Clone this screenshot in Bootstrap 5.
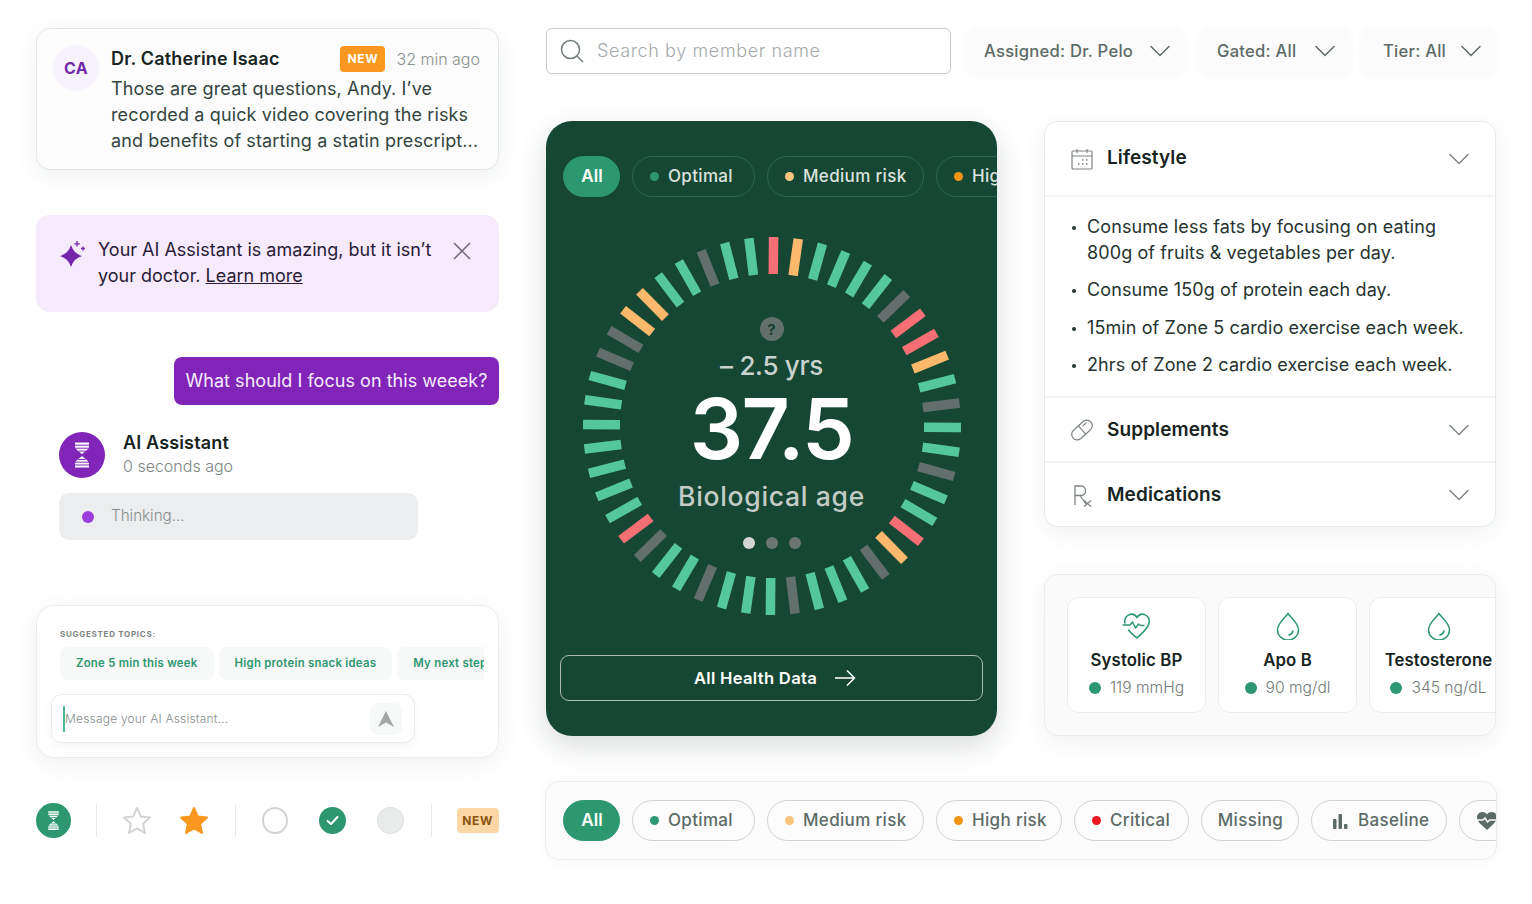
<!doctype html>
<html lang="en"><head><meta charset="utf-8"><title>Health UI kit</title>
<link href="https://cdn.jsdelivr.net/npm/bootstrap@5.3.0/dist/css/bootstrap.min.css" rel="stylesheet">
<script src="https://cdn.jsdelivr.net/npm/bootstrap@5.3.0/dist/js/bootstrap.bundle.min.js"></script>
<style>
:root{--ink:#17241f;--mut:#5d6b67;--grn:#2d9770;--pur:#8125b8}
html,body{height:904px;overflow:hidden;background:#fff}
body{font-family:Inter,"Noto Sans",sans-serif;color:var(--ink);font-size:17px}
svg{display:block;flex:none}
.canvas{padding:28px 36px 0;gap:47px;width:1532px}
.lcol{width:463px;flex:none}
.rarea{width:951px;flex:none}
.shad{box-shadow:0 6px 24px rgba(30,40,40,.07)}
.msg{height:142px;border:1px solid #e4e6e6;border-radius:14px;background:#fcfcfc;padding:16px 18px 0 16px;gap:12px}
.ini{width:46px;height:46px;background:#f7f2fc;color:#702aa8;font-weight:700;font-size:16px;letter-spacing:.02em}
.who{font-weight:600;font-size:18px;letter-spacing:.2px;margin-right:auto}
.tagn{width:45px;height:26px;background:#f9971e;color:#fff;font-size:12px;font-weight:700;border-radius:4px;letter-spacing:.05em}
.ago{color:#8a9290;font-size:16px;margin-left:11px;font-weight:300}
.msgtxt{font-size:18px;line-height:26px;color:#334540;margin-top:4px;letter-spacing:.13px;white-space:nowrap}
.note{margin-top:45px;height:97px;background:#f6eafc;border-radius:14px;padding:22px 27px 0 23px;gap:12px;color:#2a1c38;font-size:18px;line-height:26px}
.note a{color:inherit}
.bub{margin-top:45px;height:48px;width:325px;background:var(--pur);color:#f6ecfc;font-size:18px;border-radius:8px;align-self:flex-end;white-space:nowrap;letter-spacing:.04px;padding-bottom:2px}
.aiwho{margin-top:27px;margin-left:23px;gap:18px}
.aiav{width:46px;height:46px;background:var(--pur);--hg:#8125b8}
.ainame{font-weight:600;font-size:18px;line-height:22px;letter-spacing:.15px}
.aiago{color:#7c8684;font-size:16px;line-height:24px;font-weight:300}
.think{margin-top:15px;margin-left:23px;width:359px;height:47px;background:#ebedee;border-radius:10px;padding:0 0 1px 23px;gap:17px;color:#868d8c;font-size:15.2px;font-weight:300}
.pdot{width:12px;height:12px;background:#9b3ddb;margin-top:1px}
.sug{margin-top:65px;height:153px;border:1px solid #ececec;border-radius:18px;background:#fff;padding:23px 14px 0 14px}
.sugl{font-size:8px;font-weight:700;color:#7d8583;letter-spacing:.09em;margin-left:9px;line-height:10px}
.chips{gap:5px;margin:8px 0 0 9px;overflow:hidden}
.chip{height:33px;padding:0 16px;background:#f7f8f8;border-radius:8px;color:var(--grn);font-size:11.4px;font-weight:600;white-space:nowrap;flex:none;letter-spacing:.25px}
.msgin{margin-top:14px;width:364px;height:49px;border:1px solid #ececec;border-radius:11px;background:#fff;padding:0 12px 0 11px;box-shadow:0 3px 10px rgba(30,40,40,.05);color:#858c8b;font-size:12px;font-weight:300;letter-spacing:.2px}
.caret{width:2px;height:26px;background:#4fb694;margin-right:0}
.sendb{width:32px;height:32px;background:#f7f8f8;border-radius:8px;margin-left:auto}
.kit{margin-top:45px;height:35px}
.vr1{width:1px;height:33px;background:#e6e8e8}
.roundg{width:35px;height:35px;background:var(--grn);--hg:#2d9770}
.ringo{width:27px;height:27px;border:2.5px solid #d2d4d4}
.ringf{width:27px;height:27px;background:var(--grn)}
.ringg{width:27px;height:27px;background:#e9ebeb;border:1px solid #dfe1e1}
.tagl{width:43px;height:25px;background:#fbd8a6;color:#8a5310;font-weight:700;font-size:12px;border-radius:4px;letter-spacing:.06em}
.ml25{margin-left:25px}.ml26{margin-left:26px}.ml27{margin-left:27px}.ml28{margin-left:28px}.ml30{margin-left:30px}.ml31{margin-left:31px}
.srch{width:405px;height:46px;border:1px solid #c9cccb;border-radius:6px;padding-left:13px;gap:13px;color:#a4abaa;font-size:18px;font-weight:300;letter-spacing:.62px;background:#fff;box-shadow:0 1px 3px rgba(0,0,0,.05)}
.srch span{margin-top:-2px}
.fil{height:46px;background:#fbfbfb;border-radius:10px;color:var(--mut);font-weight:500;font-size:16.6px;white-space:nowrap;box-shadow:0 2px 10px rgba(30,40,40,.04);letter-spacing:.25px}
.f1{width:219px;margin-left:15px;padding-left:18px;gap:17px}
.f2{width:151px;margin-left:14px;padding-left:18px;gap:19px}
.f3{width:133px;margin-left:12px;padding-left:21px;gap:15px}
.mid{margin-top:47px;gap:47px}
.dark{width:451px;height:615px;background:#164734;border-radius:26px;padding-top:35px;box-shadow:0 10px 30px rgba(20,40,30,.16);overflow:hidden}
.pills{gap:12px;overflow:hidden;flex:none}
.pilld{padding-left:17px}
.pil{height:41px;border-radius:21px;border:1px solid #cfd2d1;padding:1px 16px 0 17px;gap:9px;font-weight:500;font-size:17px;color:var(--mut);white-space:nowrap;flex:none;background:#fcfcfc;letter-spacing:.33px}
.pil>span,.pil>svg{margin-top:-1px;flex:none}
.pilon{background:var(--grn);border-color:var(--grn);color:#fff;font-weight:600;letter-spacing:0}
.pild{background:transparent;border-color:#2b6650;color:#dbe3df}
.dt{width:9px;height:9px;background:var(--grn)}
.dm{background:#fbc47f}.dh{background:#f39312}.dc{background:#ee1522}
.wo{width:123px}.wm{width:157px}.wh{width:126px}.wc{width:115px}.wi{width:98px}.wb{width:136px}.wa{width:57px;justify-content:center}
.pil.ctr{justify-content:center}
.wb{padding-left:20px}
.gauge{display:grid;width:378px;height:378px;margin:40px auto 0}
.gauge>*{grid-area:1/1}
.tg{fill:#55c79d}.tk{fill:#626f6c}.tr{fill:#f56f75}.to{fill:#fdb96b}
.gc{padding-top:80px}
.qm{width:24px;height:24px;background:#62706c;color:#15402f;font-size:15px;font-weight:700;line-height:1}
.dlt{font-size:26px;font-weight:500;color:#c9d2ce;margin-top:9px;line-height:32px;letter-spacing:-.3px}
.bign{font-size:84px;font-weight:600;color:#fff;line-height:84px;margin-top:5px;letter-spacing:-.02em}
.bio{font-size:26.5px;font-weight:500;color:#c3ccc7;margin-top:7px;line-height:36px;letter-spacing:.68px}
.dts{gap:11px;margin-top:23px}
.d12{width:12px;height:12px;background:#6b7672}.don{background:#d3d6d4}
.alld{margin:40px 14px 0;height:46px;border:1px solid #a9bbb3;border-radius:9px;color:#fff;font-weight:600;font-size:16.6px;gap:17px;background:transparent;width:423px;padding-left:19px;letter-spacing:.3px}
.rcol{width:452px;flex:none}
.acc{height:406px;border:1px solid #e8eaea;border-radius:14px;background:#fff}
.ah{padding:1px 26px 0;gap:14px;font-weight:600;font-size:19px;border-bottom:2px solid #f2f3f3;letter-spacing:.1px}
.ah:last-child{border-bottom:0}
.h74{height:75px;padding-top:0}.h65{height:65px}
.ah .chv{margin-left:auto}
.icn24{margin:0 -1px}
.lst{height:201px;padding:16.5px 0 0 42px;margin:0;font-size:18px;line-height:26px;border-bottom:2px solid #f2f3f3;color:#26332f;letter-spacing:.1px;list-style:none}
.lst li{margin-bottom:11.67px;position:relative}
.lst li::before{content:"";position:absolute;left:-15px;top:12px;width:4px;height:4px;border-radius:50%;background:#26332f}
.mets{margin-top:47px;height:162px;border:1px solid #ececec;border-radius:14px;background:#fafafa;padding:22px 0 0 22px;gap:12px;overflow:hidden}
.met{width:139px;height:116px;background:#fff;border:1px solid #ececec;border-radius:12px;flex:none;padding-top:14px}
.mett{font-weight:600;font-size:16.8px;line-height:22px;margin-top:9px;white-space:nowrap;letter-spacing:.1px}
.metv{color:#727b79;font-size:15.6px;font-weight:300;gap:9px;margin-top:5px;white-space:nowrap}
.d12g{width:12px;height:12px;background:var(--grn)}
.strip{margin:45px 0 0 -1px;height:79px;width:952px;border:1px solid #ececec;border-radius:14px;background:#fbfbfb;padding-left:17px;overflow:hidden;box-shadow:0 2px 12px rgba(30,40,40,.04)}
</style></head><body>
<svg width="0" height="0" class="position-absolute">
<symbol id="hgl" viewBox="0 0 20 28">
<path fill="#fff" d="M3 1.500H17V5C17 8.500 12.500 10.500 10 13.200 7.500 10.500 3 8.500 3 5ZM10 15C12.500 17.600 17 19.500 17 23V26.500H3V23C3 19.500 7.500 17.600 10 15Z"/>
<path d="M3 4.200H17M3.600 7.200H16.400M6.500 10H13.500M6.500 18.500H13.500M3 21.200H17M3 24H17" stroke="var(--hg)" stroke-width="1"/>
</symbol>
<symbol id="chvs" viewBox="0 0 20 12"><path d="M1 1.500 10 10.500 19 1.500" fill="none" stroke="currentColor" stroke-width="1.500" stroke-linecap="round"/></symbol>
</svg>
<div class="canvas d-flex">
<div class="lcol d-flex flex-column">
  <div class="msg shad d-flex">
    <div class="ini rounded-circle d-flex align-items-center justify-content-center flex-shrink-0">CA</div>
    <div class="flex-grow-1">
      <div class="d-flex align-items-center"><span class="who">Dr. Catherine Isaac</span><span class="tagn d-flex align-items-center justify-content-center">NEW</span><span class="ago">32 min ago</span></div>
      <div class="msgtxt">Those are great questions, Andy. I’ve<br>recorded a quick video covering the risks<br>and benefits of starting a statin prescript...</div>
    </div>
  </div>
  <div class="note d-flex">
    <svg class="mt-1" width="27" height="26" viewBox="0 0 27 26"><path fill="#7424ad" d="M12 4 Q14.500 12.500 23 15 14.500 17.500 12 26 9.500 17.500 1 15 9.500 12.500 12 4Z"/><path d="M18 0v5.500M15.300 2.800h5.500M24 5.500v4M22 7.500h4" stroke="#7424ad" stroke-width="1.300"/></svg>
    <div class="flex-grow-1 text-nowrap">Your AI Assistant is amazing, but it isn’t<br>your doctor. <a href="#">Learn more</a></div>
    <svg class="mt-1 flex-shrink-0" width="20" height="20" viewBox="0 0 20 20"><path d="M2 2 18 18M18 2 2 18" stroke="#6f6a78" stroke-width="1.500"/></svg>
  </div>
  <div class="bub d-flex align-items-center justify-content-center">What should I focus on this weeek?</div>
  <div class="aiwho d-flex align-items-center">
    <div class="aiav rounded-circle d-flex align-items-center justify-content-center"><svg width="20" height="28"><use href="#hgl"/></svg></div>
    <div><div class="ainame">AI Assistant</div><div class="aiago">0 seconds ago</div></div>
  </div>
  <div class="think d-flex align-items-center"><span class="pdot rounded-circle"></span>Thinking...</div>
  <div class="sug shad">
    <div class="sugl text-uppercase">Suggested topics:</div>
    <div class="chips d-flex"><span class="chip d-flex align-items-center">Zone 5 min this week</span><span class="chip d-flex align-items-center">High protein snack ideas</span><span class="chip d-flex align-items-center">My next steps</span></div>
    <div class="msgin d-flex align-items-center"><span class="caret"></span>Message your AI Assistant...<span class="sendb d-flex align-items-center justify-content-center"><svg width="18" height="18" viewBox="0 0 18 18"><path fill="#a3a6a6" d="M9 1 17 17 9 12.500 1 17Z"/></svg></span></div>
  </div>
  <div class="kit d-flex align-items-center">
    <span class="roundg rounded-circle d-flex align-items-center justify-content-center"><svg width="15" height="21"><use href="#hgl"/></svg></span>
    <span class="vr1 ml25"></span>
    <svg class="ml25" width="30" height="29" viewBox="0 0 30 29"><path d="M15 2 18.800 10.600 28 11.600 21.100 17.800 23 27 15 22.300 7 27 8.900 17.800 2 11.600 11.200 10.600Z" fill="none" stroke="#d2d4d4" stroke-width="2" stroke-linejoin="round"/></svg>
    <svg class="ml27" width="30" height="29" viewBox="0 0 30 29"><path d="M15 2 18.800 10.600 28 11.600 21.100 17.800 23 27 15 22.300 7 27 8.900 17.800 2 11.600 11.200 10.600Z" fill="#f9971e" stroke="#f9971e" stroke-width="2" stroke-linejoin="round"/></svg>
    <span class="vr1 ml26"></span>
    <span class="ringo rounded-circle ml26"></span>
    <span class="ringf rounded-circle ml31 d-flex align-items-center justify-content-center"><svg width="13" height="11" viewBox="0 0 13 11"><path d="M1.500 6 5 9 11.500 2" fill="none" stroke="#fff" stroke-width="2" stroke-linecap="round" stroke-linejoin="round"/></svg></span>
    <span class="ringg rounded-circle ml31"></span>
    <span class="vr1 ml27"></span>
    <span class="tagl d-flex align-items-center justify-content-center ml25">NEW</span>
  </div>
</div>
<div class="rarea">
  <div class="d-flex">
    <div class="srch d-flex align-items-center"><svg width="24" height="24" viewBox="0 0 24 24"><circle cx="10.500" cy="10.500" r="9" fill="none" stroke="#737d7b" stroke-width="1.500"/><path d="M17 17 23 23" stroke="#737d7b" stroke-width="1.500"/></svg><span>Search by member name</span></div>
    <div class="fil f1 d-flex align-items-center">Assigned: Dr. Pelo<svg width="20" height="12"><use href="#chvs"/></svg></div>
    <div class="fil f2 d-flex align-items-center">Gated: All<svg width="20" height="12"><use href="#chvs"/></svg></div>
    <div class="fil f3 d-flex align-items-center">Tier: All<svg width="20" height="12"><use href="#chvs"/></svg></div>
  </div>
  <div class="mid d-flex">
    <div class="dark flex-shrink-0">
      <div class="pills pilld d-flex">
        <span class="pil pilon wa d-flex align-items-center">All</span>
        <span class="pil pild wo d-flex align-items-center"><span class="dt rounded-circle"></span>Optimal</span>
        <span class="pil pild wm d-flex align-items-center"><span class="dt dm rounded-circle"></span>Medium risk</span>
        <span class="pil pild wh d-flex align-items-center"><span class="dt dh rounded-circle"></span>High risk</span>
      </div>
      <div class="gauge">
        <svg width="378" height="378" viewBox="-189 -189 378 378">
          <rect class="tr" x="-4.800" y="-189" width="9.500" height="37" transform="rotate(.5)"/>
          <rect class="to" x="-4.800" y="-189" width="9.500" height="37" transform="rotate(8)"/>
          <rect class="tg" x="-4.800" y="-189" width="9.500" height="37" transform="rotate(15.500)"/>
          <rect class="tg" x="-4.800" y="-189" width="9.500" height="37" transform="rotate(23)"/>
          <rect class="tg" x="-4.800" y="-189" width="9.500" height="37" transform="rotate(30.500)"/>
          <rect class="tg" x="-4.800" y="-189" width="9.500" height="37" transform="rotate(38)"/>
          <rect class="tk" x="-4.800" y="-189" width="9.500" height="37" transform="rotate(45.500)"/>
          <rect class="tr" x="-4.800" y="-189" width="9.500" height="37" transform="rotate(53)"/>
          <rect class="tr" x="-4.800" y="-189" width="9.500" height="37" transform="rotate(60.500)"/>
          <rect class="to" x="-4.800" y="-189" width="9.500" height="37" transform="rotate(68)"/>
          <rect class="tg" x="-4.800" y="-189" width="9.500" height="37" transform="rotate(75.500)"/>
          <rect class="tk" x="-4.800" y="-189" width="9.500" height="37" transform="rotate(83)"/>
          <rect class="tg" x="-4.800" y="-189" width="9.500" height="37" transform="rotate(90.500)"/>
          <rect class="tg" x="-4.800" y="-189" width="9.500" height="37" transform="rotate(98)"/>
          <rect class="tk" x="-4.800" y="-189" width="9.500" height="37" transform="rotate(105.500)"/>
          <rect class="tg" x="-4.800" y="-189" width="9.500" height="37" transform="rotate(113)"/>
          <rect class="tg" x="-4.800" y="-189" width="9.500" height="37" transform="rotate(120.500)"/>
          <rect class="tr" x="-4.800" y="-189" width="9.500" height="37" transform="rotate(128)"/>
          <rect class="to" x="-4.800" y="-189" width="9.500" height="37" transform="rotate(135.500)"/>
          <rect class="tk" x="-4.800" y="-189" width="9.500" height="37" transform="rotate(143)"/>
          <rect class="tg" x="-4.800" y="-189" width="9.500" height="37" transform="rotate(150.500)"/>
          <rect class="tg" x="-4.800" y="-189" width="9.500" height="37" transform="rotate(158)"/>
          <rect class="tg" x="-4.800" y="-189" width="9.500" height="37" transform="rotate(165.500)"/>
          <rect class="tk" x="-4.800" y="-189" width="9.500" height="37" transform="rotate(173)"/>
          <rect class="tg" x="-4.800" y="-189" width="9.500" height="37" transform="rotate(180.500)"/>
          <rect class="tg" x="-4.800" y="-189" width="9.500" height="37" transform="rotate(188)"/>
          <rect class="tg" x="-4.800" y="-189" width="9.500" height="37" transform="rotate(195.500)"/>
          <rect class="tk" x="-4.800" y="-189" width="9.500" height="37" transform="rotate(203)"/>
          <rect class="tg" x="-4.800" y="-189" width="9.500" height="37" transform="rotate(210.500)"/>
          <rect class="tg" x="-4.800" y="-189" width="9.500" height="37" transform="rotate(218)"/>
          <rect class="tk" x="-4.800" y="-189" width="9.500" height="37" transform="rotate(225.500)"/>
          <rect class="tr" x="-4.800" y="-189" width="9.500" height="37" transform="rotate(233)"/>
          <rect class="tg" x="-4.800" y="-189" width="9.500" height="37" transform="rotate(240.500)"/>
          <rect class="tg" x="-4.800" y="-189" width="9.500" height="37" transform="rotate(248)"/>
          <rect class="tg" x="-4.800" y="-189" width="9.500" height="37" transform="rotate(255.500)"/>
          <rect class="tg" x="-4.800" y="-189" width="9.500" height="37" transform="rotate(263)"/>
          <rect class="tg" x="-4.800" y="-189" width="9.500" height="37" transform="rotate(270.500)"/>
          <rect class="tg" x="-4.800" y="-189" width="9.500" height="37" transform="rotate(278)"/>
          <rect class="tg" x="-4.800" y="-189" width="9.500" height="37" transform="rotate(285.500)"/>
          <rect class="tk" x="-4.800" y="-189" width="9.500" height="37" transform="rotate(293)"/>
          <rect class="tk" x="-4.800" y="-189" width="9.500" height="37" transform="rotate(300.500)"/>
          <rect class="to" x="-4.800" y="-189" width="9.500" height="37" transform="rotate(308)"/>
          <rect class="to" x="-4.800" y="-189" width="9.500" height="37" transform="rotate(315.500)"/>
          <rect class="tg" x="-4.800" y="-189" width="9.500" height="37" transform="rotate(323)"/>
          <rect class="tg" x="-4.800" y="-189" width="9.500" height="37" transform="rotate(330.500)"/>
          <rect class="tk" x="-4.800" y="-189" width="9.500" height="37" transform="rotate(338)"/>
          <rect class="tg" x="-4.800" y="-189" width="9.500" height="37" transform="rotate(345.500)"/>
          <rect class="tg" x="-4.800" y="-189" width="9.500" height="37" transform="rotate(353)"/>
        </svg>
        <div class="gc d-flex flex-column align-items-center">
          <span class="qm rounded-circle d-flex align-items-center justify-content-center">?</span>
          <div class="dlt">– 2.5 yrs</div>
          <div class="bign">37.5</div>
          <div class="bio">Biological age</div>
          <div class="dts d-flex"><span class="d12 don rounded-circle"></span><span class="d12 rounded-circle"></span><span class="d12 rounded-circle"></span></div>
        </div>
      </div>
      <button type="button" class="btn alld d-flex align-items-center justify-content-center">All Health Data<svg width="22" height="18" viewBox="0 0 22 18"><path d="M1 9H20.500M13 1.500 20.500 9 13 16.500" fill="none" stroke="#fff" stroke-width="1.500"/></svg></button>
    </div>
    <div class="rcol">
      <div class="acc shad d-flex flex-column">
        <div class="ah h74 d-flex align-items-center">
          <svg width="22" height="22" viewBox="0 0 22 22" fill="none" stroke="#7d8583" stroke-width="1.200"><rect x="1" y="3" width="20" height="18" rx="1"/><path d="M1 8H21M6 1v4M16 1v4"/><path d="M11 12h1.500M15 12h1.500M7 16h1.500M11 16h1.500M15 16h1.500" stroke-width="1.600"/></svg>
          <span>Lifestyle</span>
          <svg class="chv" width="20" height="12" color="#7d8583"><use href="#chvs"/></svg>
        </div>
        <ul class="lst">
          <li>Consume less fats by focusing on eating<br>800g of fruits &amp; vegetables per day.</li>
          <li>Consume 150g of protein each day.</li>
          <li>15min of Zone 5 cardio exercise each week.</li>
          <li>2hrs of Zone 2 cardio exercise each week.</li>
        </ul>
        <div class="ah h65 d-flex align-items-center">
          <svg class="icn24" width="24" height="24" viewBox="0 0 24 24" fill="none" stroke="#7d8583" stroke-width="1.200"><g transform="rotate(-42 12 12)"><rect x="0" y="6.500" width="24" height="11" rx="5.500"/><path d="M12 6.500v11M15 9.500h5"/></g></svg>
          <span>Supplements</span>
          <svg class="chv" width="20" height="12" color="#7d8583"><use href="#chvs"/></svg>
        </div>
        <div class="ah d-flex align-items-center flex-grow-1">
          <svg class="icn24" width="24" height="24" viewBox="0 0 24 24" fill="none" stroke="#7d8583" stroke-width="1.300"><path d="M5 22V3H11C17 3 17 12.500 11 12.500H5M10 12.500 16 21M14 17.500 21 23.500M21 17.500 14 23.500"/></svg>
          <span>Medications</span>
          <svg class="chv" width="20" height="12" color="#7d8583"><use href="#chvs"/></svg>
        </div>
      </div>
      <div class="mets shad d-flex">
        <div class="met d-flex flex-column align-items-center">
          <svg width="30" height="28" viewBox="0 0 30 28" fill="none" stroke="#2d9770" stroke-width="1.500" stroke-linecap="round" stroke-linejoin="round"><path d="M3 11C1.500 3 11 -1 15 5.500 19 -1 28.500 3 27 11 26 17 19 22 15 26 12.500 24 9 21.500 6.500 18"/><path d="M1 13H8L10.500 10 13.500 16 16.500 12 18.500 13.500H22"/></svg>
          <div class="mett">Systolic BP</div>
          <div class="metv d-flex align-items-center"><span class="d12g rounded-circle"></span>119 mmHg</div>
        </div>
        <div class="met d-flex flex-column align-items-center">
          <svg width="24" height="28" viewBox="0 0 24 28" fill="none" stroke="#2d9770" stroke-width="1.500" stroke-linecap="round"><path d="M12 1.500C9 6 1.500 11 1.500 18A10.500 10 0 0 0 22.500 18C22.500 11 15 6 12 1.500Z"/><path d="M17 19C16.500 21 15 22.500 13 23"/></svg>
          <div class="mett">Apo B</div>
          <div class="metv d-flex align-items-center"><span class="d12g rounded-circle"></span>90 mg/dl</div>
        </div>
        <div class="met d-flex flex-column align-items-center">
          <svg width="24" height="28" viewBox="0 0 24 28" fill="none" stroke="#2d9770" stroke-width="1.500" stroke-linecap="round"><path d="M12 1.500C9 6 1.500 11 1.500 18A10.500 10 0 0 0 22.500 18C22.500 11 15 6 12 1.500Z"/><path d="M17 19C16.500 21 15 22.500 13 23"/></svg>
          <div class="mett">Testosterone</div>
          <div class="metv d-flex align-items-center"><span class="d12g rounded-circle"></span>345 ng/dL</div>
        </div>
      </div>
    </div>
  </div>
  <div class="strip d-flex align-items-center">
    <div class="pills d-flex">
      <span class="pil pilon wa d-flex align-items-center">All</span>
      <span class="pil wo d-flex align-items-center"><span class="dt rounded-circle"></span>Optimal</span>
      <span class="pil wm d-flex align-items-center"><span class="dt dm rounded-circle"></span>Medium risk</span>
      <span class="pil wh d-flex align-items-center"><span class="dt dh rounded-circle"></span>High risk</span>
      <span class="pil wc d-flex align-items-center"><span class="dt dc rounded-circle"></span>Critical</span>
      <span class="pil wi ctr d-flex align-items-center">Missing</span>
      <span class="pil wb d-flex align-items-center"><svg width="17" height="16" viewBox="0 0 17 16" fill="#5d6b67"><rect x="1" y="6" width="3.500" height="10" rx="1"/><rect x="6.500" y="1" width="3.500" height="15" rx="1"/><rect x="12" y="11" width="3.500" height="5" rx="1"/></svg>Baseline</span>
      <span class="pil d-flex align-items-center"><svg width="20" height="19" viewBox="0 0 20 19"><path fill="#5d6b67" d="M10 3.500C13 -1 20 1 20 6.500 20 11 14 15 10 19 6 15 0 11 0 6.500 0 1 7 -1 10 3.500Z"/><path d="M0 9H6L8 7 10.500 11 12.500 9H20" fill="none" stroke="#fcfcfc" stroke-width="1.500"/></svg></span>
    </div>
  </div>
</div>
</div>
</body></html>
